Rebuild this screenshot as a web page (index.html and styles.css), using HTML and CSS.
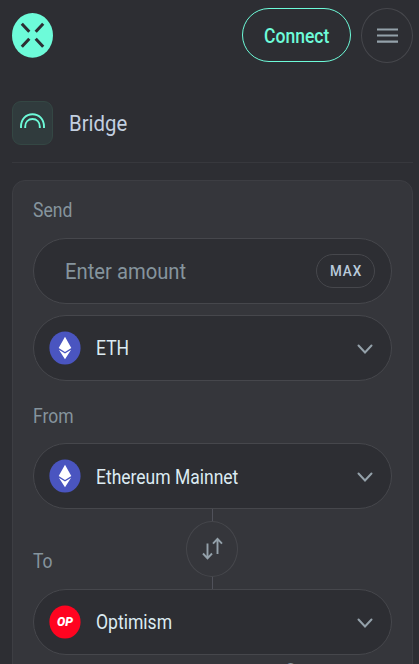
FILE: index.html
```html
<!DOCTYPE html>
<html lang="en">
<head>
<meta charset="utf-8">
<title>Bridge</title>
<link rel="stylesheet" href="styles.css">
</head>
<body>
<header class="header">
  <svg class="logo" width="41" height="45" viewBox="0 0 41 45"><ellipse cx="20.5" cy="22.4" rx="20.5" ry="22.3" fill="#6dfbd9"/><path d="M9.800 10.700l7.500 8.100M31.200 10.700l-7.500 8.100M9.800 33.800l7.500-8.100M31.200 33.800l-7.500-8.100" stroke="#2d2e33" stroke-width="3"/></svg>
  <button class="connect"><span class="t t-connect">Connect</span></button>
  <button class="menu" aria-label="Menu"><svg width="21" height="16" viewBox="0 0 21 16"><path d="M0 1.500h21M0 7.500h21M0 13.700h21" stroke="#94a1aa" stroke-width="2.200"/></svg></button>
</header>
<main>
  <div class="title">
    <div class="title-icon"><svg width="25" height="16" viewBox="0 0 25 16" fill="none" stroke="#6dfbd9" stroke-width="1.900"><path d="M1 15V13.500C1 6 6 1.200 12.500 1.200S24 6 24 13.500V15M5.200 15V13.700C5.200 9 8.300 6 12.500 6s7.300 3 7.300 7.700V15"/></svg></div>
    <h1 class="t t-title">Bridge</h1>
  </div>
  <section class="card">
    <div class="label"><span class="t t-send">Send</span></div>
    <div class="field amount"><span class="t t-amount">Enter amount</span><button class="max"><span class="t t-max">MAX</span></button></div>
    <div class="field select">
      <svg class="coin" width="32" height="34" viewBox="0 0 32 34"><ellipse cx="16" cy="17" rx="15.600" ry="16.500" fill="#4a55c0"/><path d="M16 5.800l6.300 11.200L16 21l-6.300-4zM9.900 18.800L16 22.600l6.100-3.800L16 28.300z" fill="#fff"/></svg>
      <span class="t t-eth">ETH</span>
      <svg class="chevron" width="16" height="11" viewBox="0 0 16 11"><path d="M1.500 1.500L8 8.500l6.500-7"/></svg>
    </div>
    <div class="label from"><span class="t t-from">From</span></div>
    <div class="field select">
      <svg class="coin" width="32" height="34" viewBox="0 0 32 34"><ellipse cx="16" cy="17" rx="15.600" ry="16.500" fill="#4a55c0"/><path d="M16 5.800l6.300 11.200L16 21l-6.300-4zM9.900 18.800L16 22.600l6.100-3.800L16 28.300z" fill="#fff"/></svg>
      <span class="t t-mainnet">Ethereum Mainnet</span>
      <svg class="chevron" width="16" height="11" viewBox="0 0 16 11"><path d="M1.500 1.500L8 8.500l6.500-7"/></svg>
    </div>
    <div class="between">
      <span class="t t-to">To</span>
      <div class="swap-line">
        <button class="swap" aria-label="Swap"><svg width="21" height="23" viewBox="0 0 21 23" fill="none" stroke="#94a1aa" stroke-width="1.900"><path d="M5.500 6.500v14.500M1 16.500l4.500 4.800 4.500-4.800M15.500 17V2M11 6.700l4.500-4.900L20 6.700"/></svg></button>
      </div>
    </div>
    <div class="field select">
      <svg class="coin" width="32" height="34" viewBox="0 0 32 34"><ellipse cx="16" cy="17" rx="15.600" ry="16.500" fill="#ff0420"/><text class="op" x="16" y="21.200" text-anchor="middle" textLength="16" lengthAdjust="spacingAndGlyphs">OP</text></svg>
      <span class="t t-optimism">Optimism</span>
      <svg class="chevron" width="16" height="11" viewBox="0 0 16 11"><path d="M1.500 1.500L8 8.500l6.500-7"/></svg>
    </div>
    <div class="hint">Ga</div>
  </section>
</main>
</body>
</html>
```
FILE: styles.css
```css
* { box-sizing: border-box; }
body {
  margin: 0;
  height: 664px;
  overflow: hidden;
  background: #2d2e33;
  color: #dcebf2;
  font-family: Roboto, sans-serif;
  font-size: 19.5px;
}
button { padding: 0; background: transparent; font-family: inherit; color: inherit; }
svg { display: block; flex: none; }
.t { display: inline-block; transform-origin: left center; white-space: nowrap; line-height: 24px; transform: translateY(2px) scaleX(.897); }
.t-send, .t-to, .t-optimism, .t-eth { transform: translateY(1px) scaleX(.9); }
.t-connect { transform: translateY(2px) scaleX(.9); }
.t-title { transform: translateX(1px) scaleX(.925); }
.t-amount { transform: translateY(1px) scaleX(.92); }
.t-max { transform: scaleX(.9); }
.header { display: flex; align-items: flex-start; height: 101px; padding: 8px 6px 0 12px; }
.logo { margin: 5px auto 0 0; }
.connect { width: 109px; height: 54px; border: 1px solid #6dfbd9; border-radius: 27px; color: #6dfbd9; font-size: 19.5px; font-weight: 500; text-align: left; padding-left: 21px; }
.menu { display: flex; align-items: center; justify-content: center; width: 52px; height: 55px; margin-left: 10px; border: 1px solid #46474c; border-radius: 50%; }
main { padding: 0 6px 0 12px; }
.title { display: flex; align-items: flex-start; height: 62px; border-bottom: 1px solid #37383d; }
.title-icon { display: flex; align-items: center; justify-content: center; width: 41px; height: 44px; border: 1px solid #344744; border-radius: 9px; background: #303b3d; padding-bottom: 4px; }
h1 { margin: 11px 0 0 15px; font-size: 22px; font-weight: 400; color: #c3d0e0; }
.card { height: 500px; margin-top: 17px; padding: 0 21px 0 20px; border: 1px solid #3d3e43; border-radius: 13px; background: #35363b; }
.label { height: 57px; padding-top: 17px; color: #85949d; }
.label.from { height: 62px; padding-top: 22px; }
.field { display: flex; align-items: center; width: 359px; height: 66px; border: 1px solid #46474c; border-radius: 33px; background: #2d2e33; padding: 0 18px 0 15px; }
.amount { padding: 0 16px 0 31px; justify-content: space-between; margin-bottom: 11px; color: #85949d; font-size: 22px; }
.max { width: 59px; height: 34px; border: 1px solid #46474c; border-radius: 17px; color: #b9cadb; font-size: 15px; font-weight: 500; letter-spacing: 1px; text-align: left; padding-left: 13px; }
.coin { margin-right: 15px; }
.chevron { margin: 3px 0 0 auto; fill: none; stroke: #94a1aa; stroke-width: 2; stroke-linecap: round; }
.op { font: italic 900 12px Roboto, sans-serif; fill: #fff; }
.between { display: grid; grid-template-columns: 153px 52px 1fr; height: 80px; color: #85949d; }
.t-to { margin-top: 40px; }
.swap-line { display: flex; align-items: center; height: 80px; background: linear-gradient(#50515a, #50515a) center / 1px 100% no-repeat; }
.swap { display: flex; align-items: center; justify-content: center; width: 52px; height: 56px; border: 1px solid #46474c; border-radius: 50%; background: #35363b; padding-bottom: 2px; }
.hint { width: 20px; margin: 5px 0 0 252px; color: #85949d; font-size: 16px; }
```
